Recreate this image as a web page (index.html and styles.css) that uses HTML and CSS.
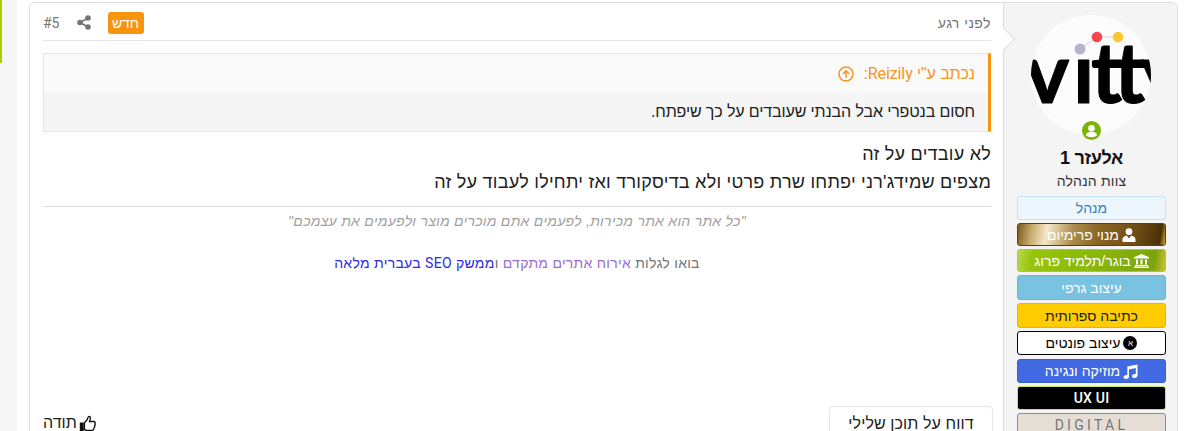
FILE: index.html
```html
<!DOCTYPE html>
<html lang="he" dir="rtl">
<head>
    <meta charset="UTF-8">
    <meta name="viewport" content="width=device-width, initial-scale=1.0">
    <title>פוסט בפורום</title>
    <link rel="stylesheet" href="styles.css">
</head>
<body>

    <div class="page">
        <article class="post">
            <!-- צד ימין: פרטי המשתמש -->
            <aside class="author">
                <div class="avatar-wrap">
                    <div class="avatar">
                        <svg width="120" height="120" viewBox="0 0 120 120">
                            <path class="logo-line" d="M49 34 L66 22 L87 22"/>
                            <text class="logo-text" x="-6 42 60 83 110" y="88" direction="ltr">vıtty</text>
                            <circle cx="49" cy="34" r="5.500" fill="#b6b4cc"/>
                            <circle cx="66" cy="22" r="5.300" fill="#f4474f"/>
                            <circle cx="87" cy="22" r="5.300" fill="#fdc72f"/>
                        </svg>
                    </div>
                    <span class="online">
                        <svg width="19" height="19" viewBox="0 0 19 19">
                            <circle cx="9.500" cy="9.500" r="9.500" fill="#7cb305"/>
                            <circle cx="9.500" cy="7.200" r="3.300" fill="#fff"/>
                            <path d="M3.800 14.200c.6-2.400 3-3.400 5.700-3.400s5.100 1 5.700 3.400c-1.400 1.300-3.400 2-5.700 2s-4.300-.7-5.700-2z" fill="#fff"/>
                        </svg>
                    </span>
                </div>
                <h3 class="author-name">אלעזר 1</h3>
                <div class="author-role">צוות הנהלה</div>
                <ul class="badges">
                    <li class="badge badge-admin">מנהל</li>
                    <li class="badge badge-gold">
                        <svg width="14" height="14" viewBox="0 0 14 14"><circle cx="7" cy="3.600" r="3.400" fill="#fff"/><path d="M0.500 14V11.500C0.500 9 3 7.800 4.800 7.500L7 10.500L9.200 7.500C11 7.800 13.500 9 13.500 11.500V14Z" fill="#fff"/></svg>
                        מנוי פרימיום
                    </li>
                    <li class="badge badge-green">
                        <svg width="15" height="14" viewBox="0 0 15 14"><path d="M7.500 0L15 3.200V4.500H0V3.200Z" fill="#fff"/><path d="M2 5.500h2v5H2zM6.500 5.500h2v5h-2zM11 5.500h2v5h-2zM1 11h13v1H1zM0 12.500h15V14H0z" fill="#fff"/></svg>
                        בוגר/תלמיד פרוג
                    </li>
                    <li class="badge badge-sky">עיצוב גרפי</li>
                    <li class="badge badge-yellow">כתיבה ספרותית</li>
                    <li class="badge badge-white">
                        <span class="alef-icon">א</span>
                        עיצוב פונטים
                    </li>
                    <li class="badge badge-music">
                        <svg width="15" height="15" viewBox="0 0 15 15"><path d="M14.500 0.500V11.500C14.500 13 13 14 11.500 14S9 13 9 12 10 10 11.800 10C12.200 10 12.500 10.100 12.800 10.200V4L6 5.500V13C6 14 4.500 15 3 15S0.500 14 0.500 13 1.800 11 3.200 11C3.600 11 4 11.100 4.300 11.200V2.500Z" fill="#fff"/></svg>
                        מוזיקה ונגינה
                    </li>
                    <li class="badge badge-ux" dir="ltr">UX UI</li>
                    <li class="badge badge-digital" dir="ltr">DIGITAL</li>
                </ul>
            </aside>

            <!-- תוכן הפוסט -->
            <div class="post-main">
                <header class="post-head">
                    <span class="post-time">לפני רגע</span>
                    <div class="post-tools">
                        <span class="tag-new">חדש</span>
                        <svg class="share-icon" width="14" height="15" viewBox="0 0 14 15">
                            <circle cx="11" cy="3" r="2.800" fill="#757575"/>
                            <circle cx="3" cy="7.500" r="2.800" fill="#757575"/>
                            <circle cx="11" cy="12" r="2.800" fill="#757575"/>
                            <path d="M11 3L3 7.500L11 12" stroke="#757575" stroke-width="1.600" fill="none"/>
                        </svg>
                        <span class="post-num" dir="ltr">#5</span>
                    </div>
                </header>

                <blockquote class="quote">
                    <div class="quote-head">
                        <span>נכתב ע"י <span class="latin">Reizily</span>:</span>
                        <svg width="16" height="16" viewBox="0 0 16 16" fill="none" stroke="#f7941d" stroke-width="1.500">
                            <circle cx="8" cy="8" r="7"/>
                            <path d="M8 12V4.800M4.900 7.800L8 4.700L11.100 7.800"/>
                        </svg>
                    </div>
                    <div class="quote-body">חסום בנטפרי אבל הבנתי שעובדים על כך שיפתח.</div>
                </blockquote>

                <div class="post-text">
                    <p>לא עובדים על זה</p>
                    <p>מצפים שמידג'רני יפתחו שרת פרטי ולא בדיסקורד ואז יתחילו לעבוד על זה</p>
                </div>

                <div class="signature">
                    <p class="sig-quote">"כל אתר הוא אתר מכירות, לפעמים אתם מוכרים מוצר ולפעמים את עצמכם"</p>
                    <p class="sig-links">בואו לגלות <span class="sig-purple">אירוח אתרים מתקדם</span> ו<span class="sig-blue">ממשק <span class="latin">SEO</span> בעברית מלאה</span></p>
                </div>

                <footer class="post-foot">
                    <button class="report-btn">דווח על תוכן שלילי</button>
                    <span class="thanks">
                        <svg width="17" height="17" viewBox="0 0 17 17">
                            <path d="M5.500 7.500C7 6.500 8.500 4.500 9 2.500C9.300 1 11 1 11.300 2.300C11.600 3.700 11 5 10.500 6.500H15C16.200 6.500 16.500 8 15.800 8.700C16.300 9.500 16.200 10.500 15.500 11C15.800 11.800 15.500 12.700 14.800 13C15 14.200 14.300 15.500 13 15.500H8C7 15.500 6.300 15 5.500 14.500Z" fill="#fff" stroke="#111" stroke-width="1.300"/>
                            <rect x="0.800" y="7.500" width="4" height="8.500" fill="#111"/>
                        </svg>
                        תודה
                    </span>
                </footer>
            </div>
        </article>

        <div class="gutter"></div>
        <div class="rail"></div>
    </div>

</body>
</html>
```

FILE: styles.css
```css
* {
    margin: 0;
    padding: 0;
    box-sizing: border-box;
}

html, body {
    height: 431px;
    overflow: hidden;
}

body {
    font-family: 'Liberation Sans', sans-serif;
    background-color: #fff;
    color: #212121;
}

.latin {
    font-family: Roboto, sans-serif;
}

.page {
    display: flex;
    height: 431px;
    padding-right: 13px;
}

/* הפוסט */
.post {
    display: flex;
    width: 1149px;
    height: 429px;
    margin-top: 2px;
    border: 1px solid #ddd;
    border-bottom: 0;
    border-radius: 6px 6px 0 0;
    overflow: hidden;
    flex-shrink: 0;
}

.gutter {
    width: 12px;
}

.rail {
    width: 17px;
    background-color: #f6f6f6;
    border-left: 2px solid #a4d000;
    border-image: linear-gradient(to bottom, #a4d000 64px, transparent 64px) 1;
}

/* פרטי המשתמש */
.author {
    position: relative;
    width: 174px;
    flex-shrink: 0;
    padding: 12px 11px 0 13px;
    background-color: #f4f4f4;
    border-left: 1px solid #ddd;
    text-align: center;
}

/* החץ שמצביע על הפוסט */
.author::before {
    content: "";
    position: absolute;
    top: 28px;
    left: -8px;
    width: 15px;
    height: 15px;
    background-color: #fff;
    border-top: 1px solid #ddd;
    border-right: 1px solid #ddd;
    transform: rotate(45deg);
}

.avatar-wrap {
    position: relative;
    width: 120px;
    margin-right: 15px;
}

.avatar {
    width: 120px;
    height: 120px;
    border-radius: 50%;
    background-color: #fcfcfc;
    overflow: hidden;
}

.avatar svg {
    display: block;
}

.logo-line {
    fill: none;
    stroke: #d5d5d5;
    stroke-width: 1;
}

.logo-text {
    font-family: Lato, sans-serif;
    font-weight: 700;
    font-size: 84px;
    font-variant-ligatures: none;
    font-kerning: none;
    fill: #000;
    stroke: #000;
    stroke-width: 1;
    stroke-linejoin: round;
}

.online {
    position: absolute;
    bottom: -5px;
    left: 51px;
    display: flex;
}

.author-name {
    margin-top: 12px;
    font-size: 18px;
    font-weight: 700;
    line-height: 22px;
    letter-spacing: -0.3px;
    color: #111;
}

.author-role {
    margin-top: 3px;
    font-size: 14px;
    line-height: 18px;
    letter-spacing: 0.2px;
    color: #333;
}

.badges {
    display: flex;
    flex-direction: column;
    gap: 3px;
    margin-top: 6px;
    list-style: none;
}

.badge {
    display: flex;
    align-items: center;
    justify-content: center;
    gap: 3px;
    height: 24px;
    flex-shrink: 0;
    border: 1px solid transparent;
    border-radius: 3px;
    font-size: 14px;
    color: #fff;
}

.badge-admin {
    background-color: #eef6fd;
    border-color: #c5e1f7;
    color: #3b7fb5;
}

.badge-gold {
    height: 23px;
    background: linear-gradient(100deg, #7a5a1e 0%, #c9ad70 10%, #f5e8c8 20%, #a98a48 38%, #8a6526 55%, #6f4c15 80%, #4a3008 96%, #e0a828 100%);
    border-color: #5c3f10;
}

.badge-green {
    height: 23px;
    background: linear-gradient(100deg, #b9d84e 0%, #98c50a 10%, #8ab80c 50%, #7da40f 92%, #cfc42f 100%);
    border-color: #b5c52a;
}

.badge-sky {
    height: 25px;
    background-color: #7ac2e1;
    border-color: #6db5d6;
}

.badge-yellow {
    height: 25px;
    background-color: #ffcc00;
    border-color: #e5b800;
    color: #222;
}

.badge-white {
    background-color: #fff;
    border-color: #000;
    color: #000;
}

.alef-icon {
    display: flex;
    align-items: center;
    justify-content: center;
    width: 14px;
    height: 14px;
    border-radius: 50%;
    background-color: #000;
    color: #fff;
    font-size: 8px;
}

.badge-music {
    margin-top: 1px;
    background-color: #4169e1;
    border-color: #3a5fcd;
}

.badge-ux {
    background-color: #000;
    border-color: #c5e860;
    font-family: Roboto, sans-serif;
    font-weight: 500;
    letter-spacing: 0.2px;
}

.badge-digital {
    background-color: #e4ded6;
    border-color: #8b8b95;
    color: #777;
    font-family: Roboto, sans-serif;
    letter-spacing: 3.300px;
}

/* תוכן הפוסט */
.post-main {
    flex: 1;
    min-width: 0;
    display: flex;
    flex-direction: column;
    padding: 0 12px 0 13px;
    background-color: #fff;
}

.post-head {
    display: flex;
    align-items: center;
    justify-content: space-between;
    height: 38px;
    border-bottom: 1px solid #e5e5e5;
    padding-top: 8px;
    padding-bottom: 5px;
}

.post-time {
    font-size: 14px;
    letter-spacing: 0.5px;
    color: #757575;
}

.post-tools {
    display: flex;
    align-items: center;
    margin-top: -1px;
}

.tag-new {
    width: 36px;
    height: 22px;
    border-radius: 3px;
    background-color: #f7940d;
    color: #fff;
    font-size: 14px;
    line-height: 22px;
    text-align: center;
}

.share-icon {
    margin: 0 17px;
}

.post-num {
    font-family: Roboto, sans-serif;
    font-size: 14px;
    color: #757575;
}

/* ציטוט */
.quote {
    margin-top: 12px;
    border: 1px solid #e5e5e5;
    border-right: 3px solid #f7940d;
    background-color: #f5f5f5;
}

.quote-head {
    display: flex;
    align-items: center;
    gap: 9px;
    height: 39px;
    padding: 0 13px;
    background-color: #fafafa;
    color: #f7941d;
    font-size: 16px;
    letter-spacing: -0.1px;
}

.quote-body {
    height: 38px;
    padding: 0 13px;
    font-size: 16px;
    line-height: 37px;
    letter-spacing: -0.12px;
    color: #212121;
}

.post-text {
    margin-top: 8px;
    font-size: 18px;
    line-height: 28px;
    letter-spacing: 0.24px;
}

.signature {
    margin-top: 10px;
    border-top: 1px solid #ddd;
    text-align: center;
    font-size: 14px;
    letter-spacing: 0.28px;
}

.sig-quote {
    margin-top: 5px;
    font-style: italic;
    line-height: 18px;
    color: #9e9e9e;
}

.sig-links {
    margin-top: 24px;
    line-height: 18px;
    color: #757575;
}

.sig-purple {
    color: #9b6dce;
}

.sig-blue {
    color: #2a2ae8;
}

.post-foot {
    display: flex;
    align-items: flex-start;
    justify-content: space-between;
    margin-top: auto;
    margin-right: -2px;
    height: 25px;
    flex-shrink: 0;
}

.report-btn {
    width: 164px;
    height: 36px;
    border: 1px solid #e5e5e5;
    border-radius: 4px;
    background-color: #fff;
    color: #212121;
    font-family: inherit;
    font-size: 16px;
    letter-spacing: 0.1px;
}

.thanks {
    display: flex;
    align-items: center;
    gap: 2px;
    margin-top: 8px;
    font-size: 16px;
    color: #212121;
}
```
